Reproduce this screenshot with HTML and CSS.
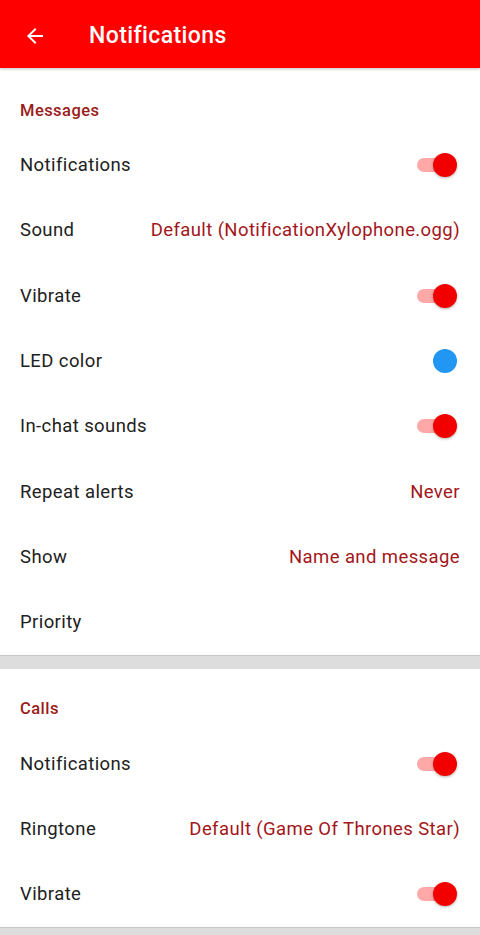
FILE: index.html
```html
<!DOCTYPE html>
<html>
<head>
<meta charset="utf-8">
<link rel="stylesheet" href="styles.css">
</head>
<body>
<header class="appbar">
  <svg class="back" width="24" height="24" viewBox="0 0 24 24"><path d="M20 11H7.83l5.59-5.59L12 4l-8 8 8 8 1.41-1.41L7.83 13H20v-2z" fill="#fff"/></svg>
  <h1 class="title">Notifications</h1>
</header>
<main>
  <section class="group first">
    <div class="group-title">Messages</div>
    <div class="row"><span class="label">Notifications</span><span class="switch"><span class="track"></span><span class="thumb"></span></span></div>
    <div class="row"><span class="label">Sound</span><span class="value">Default (NotificationXylophone.ogg)</span></div>
    <div class="row"><span class="label">Vibrate</span><span class="switch"><span class="track"></span><span class="thumb"></span></span></div>
    <div class="row"><span class="label">LED color</span><span class="dot"></span></div>
    <div class="row"><span class="label">In-chat sounds</span><span class="switch"><span class="track"></span><span class="thumb"></span></span></div>
    <div class="row"><span class="label">Repeat alerts</span><span class="value">Never</span></div>
    <div class="row"><span class="label">Show</span><span class="value">Name and message</span></div>
    <div class="row"><span class="label">Priority</span></div>
  </section>
  <div class="divider"></div>
  <section class="group">
    <div class="group-title">Calls</div>
    <div class="row"><span class="label">Notifications</span><span class="switch"><span class="track"></span><span class="thumb"></span></span></div>
    <div class="row"><span class="label">Ringtone</span><span class="value">Default (Game Of Thrones Star)</span></div>
    <div class="row"><span class="label">Vibrate</span><span class="switch"><span class="track"></span><span class="thumb"></span></span></div>
  </section>
  <div class="divider bottom"></div>
</main>
</body>
</html>
```
FILE: styles.css
```css
* { box-sizing: border-box; }
html, body { margin: 0; padding: 0; }
body {
  width: 480px;
  height: 935px;
  overflow: hidden;
  background: #fff;
  font-family: Roboto, "Liberation Sans", sans-serif;
  color: #212121;
}
.appbar {
  height: 68px;
  background: #ff0000;
  display: flex;
  align-items: center;
  padding-left: 23px;
  padding-top: 3px;
  box-shadow: 0 1px 3px rgba(0,0,0,0.25);
  position: relative;
  z-index: 1;
}
.back { display: block; }
.title {
  margin: 0 0 0 42px;
  color: #fff;
  font-size: 23px;
  font-weight: 500;
  letter-spacing: 0.4px;
}
.group-title {
  height: 62.5px;
  padding-top: 30px;
  padding-left: 20px;
  color: #9b1b1b;
  font-size: 16.5px;
  font-weight: 500;
  letter-spacing: 0.45px;
}
.group.first .group-title {
  height: 64.5px;
  padding-top: 33px;
}
.row {
  height: 65.33px;
  display: flex;
  align-items: center;
  justify-content: space-between;
  padding: 0 20px;
}
.label {
  font-size: 18.5px;
  letter-spacing: 0.4px;
  color: #212121;
}
.value {
  font-size: 18.5px;
  letter-spacing: 0.4px;
  color: #a3161b;
}
.switch {
  position: relative;
  width: 40px;
  height: 24px;
  margin-right: 3px;
}
.track {
  position: absolute;
  left: 0;
  top: 5px;
  width: 36px;
  height: 14px;
  border-radius: 7px;
  background: #ffa8a8;
}
.thumb {
  position: absolute;
  right: 0;
  top: 0;
  width: 24px;
  height: 24px;
  border-radius: 50%;
  background: #f20000;
  box-shadow: 0 1px 3px rgba(0,0,0,0.3);
}
.dot {
  width: 24px;
  height: 24px;
  border-radius: 50%;
  background: #2196f3;
  margin-right: 3px;
}
.divider {
  height: 13.5px;
  background: #dddddd;
  border-top: 1px solid #c8c8c8;
}
.divider.bottom { height: 20px; }
```
